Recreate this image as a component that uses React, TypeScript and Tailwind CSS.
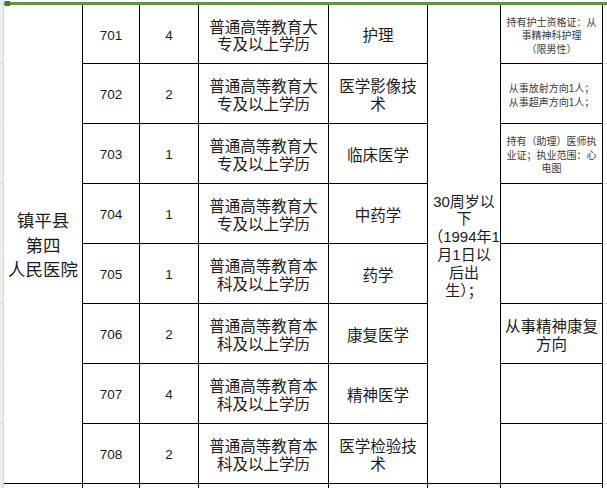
import React from 'react';

type Row = {
  code: string;
  count: string;
  edu: string[];
  major: string[];
  remark: string[];
  small?: boolean;
};

const DAZHUAN = ['普通高等教育大', '专及以上学历'];
const BENKE = ['普通高等教育本', '科及以上学历'];

const rows: Row[] = [
  { code: '701', count: '4', edu: DAZHUAN, major: ['护理'], remark: ['持有护士资格证：从', '事精神科护理', '（限男性）'], small: true },
  { code: '702', count: '2', edu: DAZHUAN, major: ['医学影像技', '术'], remark: ['从事放射方向1人；', '从事超声方向1人；'], small: true },
  { code: '703', count: '1', edu: DAZHUAN, major: ['临床医学'], remark: ['持有（助理）医师执', '业证；执业范围：心', '电图'], small: true },
  { code: '704', count: '1', edu: DAZHUAN, major: ['中药学'], remark: [] },
  { code: '705', count: '1', edu: BENKE, major: ['药学'], remark: [] },
  { code: '706', count: '2', edu: BENKE, major: ['康复医学'], remark: ['从事精神康复', '方向'] },
  { code: '707', count: '4', edu: BENKE, major: ['精神医学'], remark: [] },
  { code: '708', count: '2', edu: BENKE, major: ['医学检验技', '术'], remark: [] },
];

const cell = 'flex flex-col items-center justify-center text-center pt-[4px] border-r border-b border-black';

function Lines({ lines }: { lines: string[] }) {
  return (
    <>
      {lines.map((l, i) => (
        <span key={i} className="block whitespace-nowrap">{l}</span>
      ))}
    </>
  );
}

export default function App() {
  return (
    <div className="relative flex w-[607px] h-[488px] overflow-hidden bg-white text-[#1c1c1c] font-['Liberation_Sans','Noto_Sans_CJK_SC',sans-serif]">
      {/* spreadsheet row header strip */}
      <div className="flex flex-col w-[4px] h-full bg-[#eeeeee] border-r border-[#d8d8d8]">
        <div className="h-[64px] border-b border-[#d6d6d6]" />
        {Array.from({ length: 7 }).map((_, i) => (
          <div key={i} className="h-[60px] shrink-0 border-b border-[#d6d6d6]" />
        ))}
      </div>

      <div className="flex-1 flex flex-col">
        <div className="mt-[2px] h-[3px] bg-[#5b9641]" />
        <div className="grid grid-cols-[79px_57px_59px_130px_99px_73px_102px_1fr] grid-rows-[59px_repeat(7,60px)_1fr] flex-1">
          {rows.map((r, i) => (
            <React.Fragment key={r.code}>
              {i === 0 && (
                <div className={`${cell} row-span-8 text-[17.5px] leading-[24.5px]`}>
                  <Lines lines={['镇平县', '第四', '人民医院']} />
                </div>
              )}
              <div className={`${cell} text-[13.5px]`}>{r.code}</div>
              <div className={`${cell} text-[13.5px]`}>{r.count}</div>
              <div className={`${cell} text-[15.5px] leading-[17.5px]`}>
                <Lines lines={r.edu} />
              </div>
              <div className={`${cell} text-[15.5px] leading-[17.5px]`}>
                <Lines lines={r.major} />
              </div>
              {i === 0 && (
                <div className={`${cell} row-span-8 text-[15px] leading-[17.8px]`}>
                  <Lines lines={['30周岁以', '下', '（1994年1', '月1日以', '后出', '生）；']} />
                </div>
              )}
              <div
                className={`${cell} ${
                  r.small ? 'text-[10px] leading-[13.5px] text-[#3a3a3a]' : 'text-[15.5px] leading-[18px]'
                }`}
              >
                <Lines lines={r.remark} />
              </div>
              <div className="border-b border-[#e2e2e2]" />
            </React.Fragment>
          ))}
          {Array.from({ length: 7 }).map((_, i) => (
            <div key={i} className="border-r border-black" />
          ))}
          <div />
        </div>
      </div>

      <div className="absolute left-[5px] top-[1px] w-[5px] h-[5px] bg-[#3f7d2b]" />
    </div>
  );
}
